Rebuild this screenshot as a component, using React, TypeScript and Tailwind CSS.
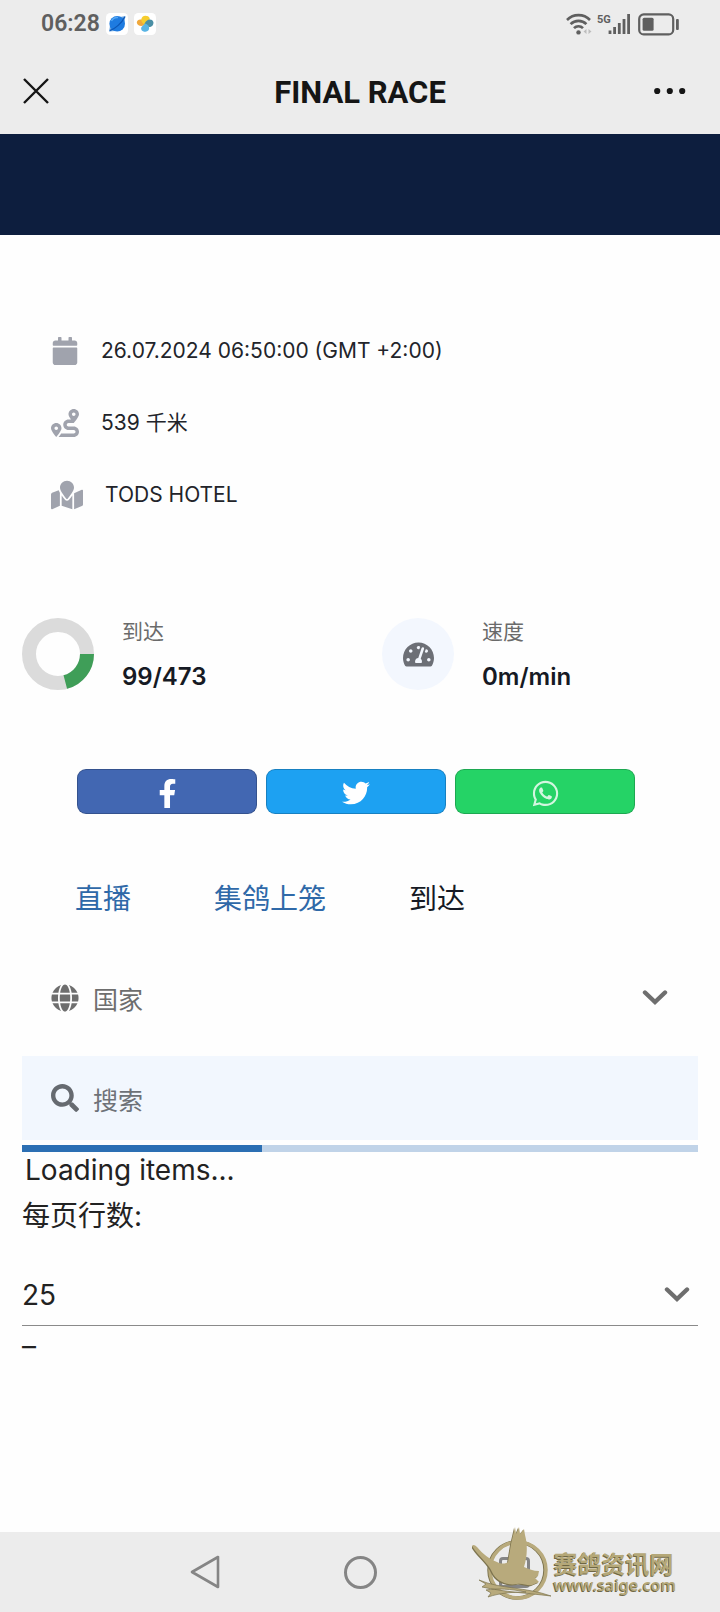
import type { ReactNode } from "react";
import {
  FaCalendar,
  FaFacebookF,
  FaGlobe,
  FaMapMarked,
  FaRoute,
  FaSearch,
  FaTachometerAlt,
  FaTwitter,
  FaWhatsapp,
} from "react-icons/fa";

function ChevronDown() {
  return (
    <svg viewBox="0 0 26 16" className="h-4 w-[26px] text-[#6e6e6e]" aria-hidden="true">
      <path d="M3 2.5 L13 12 L23 2.5" fill="none" stroke="currentColor" strokeWidth="4.4" strokeLinecap="round" strokeLinejoin="miter" />
    </svg>
  );
}

function BrowserIcon() {
  return (
    <svg viewBox="0 0 22 22" className="size-[22px]" aria-hidden="true">
      <rect width="22" height="22" rx="4.5" fill="#fff" />
      <path d="M3 18.5 L4 13 L9 18 Z M19.5 3 L14 4 L18.5 8.5 Z" fill="#6fa8e0" />
      <circle cx="11.2" cy="10.8" r="7.8" fill="#1e7be0" />
      <path d="M3.8 17.6 C9 16 16 10 18.8 3.8" fill="none" stroke="#0b55b4" strokeWidth="1.2" />
      <path d="M5.5 8 A6.5 6.5 0 0 1 12 4.5" fill="none" stroke="#55a9f5" strokeWidth="1.4" />
    </svg>
  );
}

function PinwheelIcon() {
  return (
    <svg viewBox="0 0 22 22" className="size-[22px]" aria-hidden="true">
      <rect width="22" height="22" rx="4.5" fill="#fff" />
      <path d="M12 10 C10 14.5 3 13.5 2.8 9.5 C3 6.5 7 5.5 10 8Z" fill="#f0a83c" />
      <path d="M11 12 C5.5 9 6.5 3 11.5 2.8 C15.5 2.8 17 6 14.5 8.5Z" fill="#f6cd2e" />
      <path d="M10.5 11 C12 6 18 5 19.4 9 C20 13 16 15 13 13.5Z" fill="#4b8fa5" />
      <path d="M11 10.5 C16.5 12 16.5 18.3 11.5 18.8 C7.5 18.8 6 15.5 8 13.5Z" fill="#58b4e4" />
    </svg>
  );
}

function StatusBar() {
  return (
    <div className="flex h-12 items-center justify-between pr-10 pl-[41px] text-[#5f5f5f]">
      <div className="flex items-center gap-[6px]">
        <time className="text-[23px] leading-6 font-semibold">06:28</time>
        <BrowserIcon />
        <PinwheelIcon />
      </div>
      <svg viewBox="0 0 114 24" className="h-6 w-[114px]" fill="none" stroke="currentColor" aria-hidden="true">
        <g strokeWidth="2.6">
          <path d="M1 8 A16 16 0 0 1 24 8" />
          <path d="M4.6 12.2 A11 11 0 0 1 20.4 12.2" />
          <path d="M8 16.2 A6.2 6.2 0 0 1 17 16.2" />
        </g>
        <circle cx="12.5" cy="20.4" r="2.2" fill="currentColor" stroke="none" />
        <path d="M20.5 17 L17.5 19.5 L20.5 22 Z M22.5 17 L25.5 19.5 L22.5 22 Z" fill="#bdbdbd" stroke="none" />
        <text x="31" y="10.5" fontSize="11" fontWeight="700" fill="currentColor" stroke="none">5G</text>
        <path d="M44 18.5V22 M48.6 15V22 M53.3 11V22 M58 7V22 M62.6 2V22" strokeWidth="2.8" />
        <rect x="73.2" y="2.4" width="34" height="20" rx="4.5" strokeWidth="2.2" />
        <rect x="76.6" y="5.8" width="11" height="13" rx="1.5" fill="currentColor" stroke="none" />
        <rect x="110" y="7" width="2.8" height="11" rx="1" fill="currentColor" stroke="none" />
      </svg>
    </div>
  );
}

function TitleBar() {
  return (
    <div className="flex h-[86px] items-center justify-between pr-[34px] pl-[22px] text-[#151515]">
      <button type="button" aria-label="Close" className="flex w-12 items-center">
        <svg viewBox="0 0 28 28" className="size-7" aria-hidden="true">
          <path d="M2 2 L26 26 M26 2 L2 26" stroke="currentColor" strokeWidth="2.4" />
        </svg>
      </button>
      <h1 className="pt-[3px] text-[31px] leading-9 font-bold">FINAL RACE</h1>
      <button type="button" aria-label="More" className="flex w-9 items-center justify-end">
        <svg viewBox="0 0 32 8" className="h-2 w-8" fill="currentColor" aria-hidden="true">
          <circle cx="3.2" cy="4" r="3.1" />
          <circle cx="15.8" cy="4" r="3.1" />
          <circle cx="28.2" cy="4" r="3.1" />
        </svg>
      </button>
    </div>
  );
}

function InfoRow({ icon, children }: { icon: ReactNode; children: ReactNode }) {
  return (
    <li className="flex h-[72px] items-center">
      <span className="flex min-w-[50px] text-[28px] text-[#a0a3ad]">{icon}</span>
      <span className="text-[21px] leading-7 text-[#22242a]">{children}</span>
    </li>
  );
}

function Stat({ figure, label, value }: { figure: ReactNode; label: string; value: string }) {
  return (
    <div className="flex items-center gap-7">
      {figure}
      <dl>
        <dt className="text-[21px] leading-[45px] text-[#6a6a6a]">{label}</dt>
        <dd className="text-[24px] leading-[45px] font-semibold text-[#161a24]">{value}</dd>
      </dl>
    </div>
  );
}

function ShareLink({ label, className, children }: { label: string; className: string; children: ReactNode }) {
  return (
    <a href="#share" aria-label={label} className={`flex h-[45px] flex-1 items-center justify-center rounded-[9px] border border-black/20 pt-[3px] text-white ${className}`}>
      {children}
    </a>
  );
}

const DOVE =
  "M0 20 C1 18 3 19 5 21 C11 28 17 33 25 36 C29 38 33 38 36 36 C37 30 38 24 39 18 L43 1 L44 8 L47 1 L48 8 L52 3 L53 9 C56 20 55 32 52 41 C57 43 61 45 67 45 L66 50 L63 52 L67 56 L60 59 C56 60 50 57 45 58 C35 60 24 55 20 46 C17 38 6 30 0 20Z";

function Watermark() {
  return (
    <a href="#saige" className="absolute top-[-6px] right-[44px] flex items-center text-[#b5a878]">
      <svg viewBox="0 0 82 74" className="h-[74px] w-[82px]" aria-hidden="true">
        <circle cx="45" cy="44" r="28" fill="none" stroke="#7d744f" strokeWidth="3.5" />
        <circle cx="46" cy="44" r="28" fill="none" stroke="#b8aa7c" strokeWidth="3.5" />
        <path d={DOVE} transform="translate(-1 1)" fill="#7d744f" />
        <path d={DOVE} fill="#b8aa7c" />
        <path d="M7 54 C28 63 54 61 79 70 C54 67 33 66 10 61 L14 58Z M14 64 L19 67 L16 71 C28 67 40 66 54 66 C39 63 25 62 14 64Z" fill="#b8aa7c" stroke="#7d744f" strokeWidth=".7" />
      </svg>
      <span className="flex flex-col pt-5 [text-shadow:-1px_1px_0_#6f6745]">
        <span className="text-[24px] leading-6 font-bold">赛鸽资讯网</span>
        <span className="font-['Noto_Sans'] text-[16px] leading-4 font-semibold">www.saige.com</span>
      </span>
    </a>
  );
}

export default function App() {
  return (
    <div className="flex min-h-screen flex-col bg-[#fefefe] font-[Inter,'Noto_Sans_CJK_SC',sans-serif]">
      <header className="bg-[#ececec] font-[Roboto,sans-serif]">
        <StatusBar />
        <TitleBar />
      </header>
      <div className="h-[101px] bg-[#0d1e3e]" />

      <main className="flex flex-col px-[22px] pt-20">
        <ul className="pl-[29px]">
          <InfoRow icon={<FaCalendar />}>26.07.2024 06:50:00 (GMT +2:00)</InfoRow>
          <InfoRow icon={<FaRoute />}>539 千米</InfoRow>
          <InfoRow icon={<FaMapMarked className="size-8" />}>
            <span className="pl-1">TODS HOTEL</span>
          </InfoRow>
        </ul>

        <section className="mt-[78px] grid grid-cols-2 gap-11">
          <Stat
            label="到达"
            value="99/473"
            figure={
              <svg viewBox="0 0 72 72" className="size-[72px]" fill="none" strokeWidth="14" aria-hidden="true">
                <circle cx="36" cy="36" r="29" stroke="#dbdbdb" />
                <circle cx="36" cy="36" r="29" stroke="#3f9e58" pathLength="473" strokeDasharray="99 374" />
              </svg>
            }
          />
          <Stat
            label="速度"
            value="0m/min"
            figure={
              <span className="flex size-[72px] items-center justify-center rounded-full bg-[#f3f7fe] text-[31px] text-[#6c6f76]">
                <FaTachometerAlt />
              </span>
            }
          />
        </section>

        <section className="mt-[70px] flex gap-[9px] pr-[63px] pl-[55px]">
          <ShareLink label="Facebook" className="bg-[#4267b2]">
            <FaFacebookF className="size-[29px]" />
          </ShareLink>
          <ShareLink label="Twitter" className="bg-[#1da1f2]">
            <FaTwitter className="size-7" />
          </ShareLink>
          <ShareLink label="WhatsApp" className="bg-[#25d366]">
            <FaWhatsapp className="size-[29px] opacity-80" />
          </ShareLink>
        </section>

        <nav className="mt-[65px] flex gap-[83px] pl-[53px] text-[28px] leading-10">
          <a href="#live" className="text-[#2f69a8]">直播</a>
          <a href="#basketing" className="text-[#2f69a8]">集鸽上笼</a>
          <a href="#arrivals" aria-current="page" className="text-[#161a24]">到达</a>
        </nav>

        <div className="mt-[37px] flex h-[84px] items-center pr-[30px] pl-[29px] text-[#6e6e6e]">
          <FaGlobe className="size-7 shrink-0" />
          <select aria-label="国家" className="min-w-0 flex-1 appearance-none bg-transparent pt-1 pl-[14px] text-[25px] leading-9">
            <option>国家</option>
          </select>
          <ChevronDown />
        </div>

        <div className="mt-4 flex h-[84px] items-center bg-[#f2f7fe] pl-[29px] text-[#666a70]">
          <FaSearch className="size-7 shrink-0" />
          <input type="search" aria-label="搜索" placeholder="搜索" className="min-w-0 flex-1 bg-transparent pt-[5px] pl-[14px] text-[25px] leading-9 placeholder:text-[#6e7278]" />
        </div>
        <div role="progressbar" aria-label="Loading items" className="mt-[5px] h-[7px] bg-[#c0d3e8]">
          <div className="h-full w-[35.5%] bg-[#2c6fb3]" />
        </div>

        <p className="pl-[3px] text-[28px] leading-9 text-[#222]">Loading items...</p>
        <label htmlFor="rows" className="mt-2 text-[28px] leading-10 text-[#222]">每页行数:</label>
        <div className="mt-[29px] flex h-[61px] items-center border-b border-[#8a8a8a] pr-2">
          <select id="rows" className="min-w-0 flex-1 appearance-none bg-transparent text-[28px] leading-9 text-[#222]">
            <option>25</option>
          </select>
          <ChevronDown />
        </div>
        <p className="text-[28px] leading-10 text-[#222]">–</p>
      </main>

      <footer className="relative mt-auto grid h-20 grid-cols-[154px_154px_154px] place-items-center justify-center bg-[#ececec] text-[#858585]">
        <button type="button" aria-label="Back">
          <svg viewBox="0 0 34 36" className="h-9 w-[34px]" aria-hidden="true">
            <path d="M3 18 L29 3 V33 Z" fill="none" stroke="currentColor" strokeWidth="2.6" strokeLinejoin="round" />
          </svg>
        </button>
        <button type="button" aria-label="Home" className="size-[33px] rounded-full border-3 border-current" />
        <button type="button" aria-label="Recent apps" className="size-[31px] rounded-sm border-3 border-current" />
        <Watermark />
      </footer>
    </div>
  );
}
